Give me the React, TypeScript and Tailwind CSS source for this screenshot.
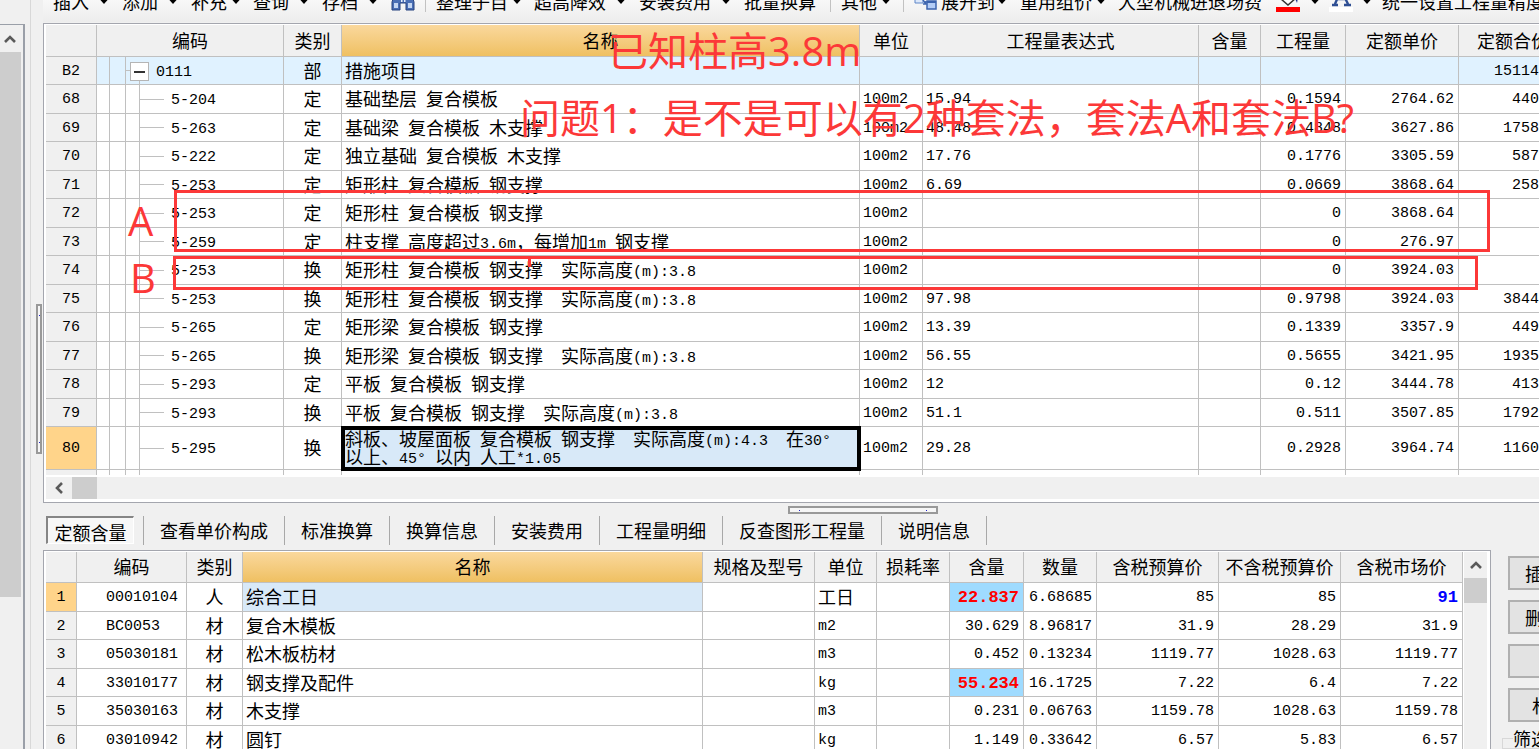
import React from "react";

const SANS = "font-['Noto_Sans_CJK_SC',sans-serif]";
const MONO = "font-['Liberation_Mono','Noto_Sans_CJK_SC',monospace]";

/** Mixed text: Latin runs take a half-width monospaced face beside full-width Chinese. */
function T({ children }: { children: string }) {
  const parts = children.split(/([\x20-\x7e°]+)/).filter(Boolean);
  return (
    <>
      {parts.map((p, i) =>
        /^[\x20-\x7e°]/.test(p) ? (
          <span key={i} className={`${MONO} align-[1px] text-[15px] leading-[0px]`}>{p}</span>
        ) : (
          <React.Fragment key={i}>{p}</React.Fragment>
        )
      )}
    </>
  );
}

function Caret() {
  return (
    <svg width="8" height="8" viewBox="0 0 8 8" className="shrink-0" aria-hidden="true">
      <path d="M0 1.5h8v1L4 7 0 2.500z" fill="#000" />
    </svg>
  );
}

function Chevron({ dir }: { dir: "up" | "left" }) {
  return (
    <svg width="12" height="12" viewBox="0 0 12 12" aria-hidden="true">
      <path d={dir === "up" ? "M1 9l5-5 5 5" : "M9 1L4 6l5 5"} fill="none" stroke="#5a5a5a" strokeWidth="2.6" />
    </svg>
  );
}

function Tool({ label, menu, tight }: { label: string; menu?: boolean; tight?: boolean }) {
  return (
    <button type="button" className={`flex shrink-0 items-center whitespace-nowrap ${tight ? "gap-[5px] pr-[13px]" : "gap-[11px] pr-[14px]"}`}>
      {label}
      {menu && <Caret />}
    </button>
  );
}

const Sep = () => <span className="mr-[10px] h-[22px] w-px shrink-0 self-end bg-[#c2c2c2]" />;

function Toolbar() {
  return (
    <div className="flex h-[22px] shrink-0 items-end overflow-hidden bg-linear-to-b from-[#f8f8f8] to-[#ededed] pl-[10px] text-[18px]">
      <div className="flex shrink-0 items-center pb-[10px] leading-[20px]">
        <Tool label="插入" menu />
        <Tool label="添加" menu />
        <Tool label="补充" menu tight />
        <Tool label="查询" menu />
        <Tool label="存档" menu />
        <button type="button" aria-label="查找" className="mr-[10px] shrink-0">
          <svg width="24" height="20" viewBox="0 0 24 20">
            <path d="M4 2h5v4h6V2h5l3 9v8h-8v-7H9v7H1v-8z" fill="#4a6fb5" stroke="#27437f" />
            <path d="M3 12h4v5H3zM17 12h4v5h-4z" fill="#c4d6f2" />
            <path d="M10 6h1.500v5H10zM13 6h1.500v5H13z" fill="#e4edfa" />
          </svg>
        </button>
        <Sep />
        <Tool label="整理子目" menu tight />
        <Tool label="超高降效" menu />
        <Tool label="安装费用" menu />
        <Tool label="批量换算" />
        <Sep />
        <Tool label="其他" menu tight />
        <Sep />
        <button type="button" className="flex shrink-0 items-center gap-[3px] pr-[14px]">
          <svg width="24" height="20" viewBox="0 0 24 20" aria-hidden="true">
            <path d="M1 3h8v9H1z" fill="#dce8fa" stroke="#5f86c8" />
            <path d="M13 10h9v8h-9z" fill="#b4cdf6" stroke="#3c64ae" strokeWidth="1.500" />
            <path d="M13 10h9v2h-9z" fill="#3c64ae" />
            <path d="M9 9l3 4M12 10v3H9" fill="none" stroke="#3c64ae" strokeWidth="1.500" />
          </svg>
          展开到
          <Caret />
        </button>
        <Tool label="重用组价" menu tight />
        <Tool label="大型机械进退场费" />
        <button type="button" aria-label="填充颜色" className="flex shrink-0 items-center gap-[11px] pr-[10px]">
          <svg width="24" height="22" viewBox="0 0 24 22">
            <path d="M5 9l8-8 7 7-8 7z" fill="#fff" stroke="#333" strokeWidth="1.500" />
            <path d="M17 4c5 1 5 5 4 9-1-3-2-4-4-5z" fill="#1c2f8a" />
            <path d="M0 17h24v5H0z" fill="#f00" />
          </svg>
          <Caret />
        </button>
        <button type="button" aria-label="文字颜色" className="flex shrink-0 items-center gap-[10px] pr-[11px]">
          <svg width="24" height="22" viewBox="0 0 24 22">
            <path d="M3 15h6M15 15h7M6 14L12 0l7 14M8 9h8" fill="none" stroke="#2f4f94" strokeWidth="2.400" />
            <path d="M0 17h24v5H0z" fill="#fff" />
          </svg>
          <Caret />
        </button>
        <Tool label="统一设置工程量精度" />
      </div>
    </div>
  );
}

const TH = "border-b border-r border-[#c0c0c0] bg-[#f0f0f0] px-0 pt-0 pb-[2px] text-center font-normal";
const TH_GOLD = "border-b border-r border-[#c0c0c0] bg-linear-to-b from-[#fad89c] to-[#efc061] px-0 pt-0 pb-[2px] text-center font-normal";
const TD = "border-b border-r border-[#c0c0c0] pt-0 pb-[2px]";
const NUM = "font-['Liberation_Mono',monospace] text-[15px]";
const NUM_BOLD = "font-['Liberation_Mono',monospace] text-[17px] font-bold";
const TDN = "border-b border-r border-[#c0c0c0] pt-[2px] pb-0";

type Item = [no: string, code: string, kind: string, name: string, unit: string, expr: string, qty: string, price: string, total: string];

const items: Item[] = [
  ["B2", "0111", "部", "措施项目", "", "", "", "", "15114"],
  ["68", "5-204", "定", "基础垫层 复合模板", "100m2", "15.94", "0.1594", "2764.62", "440"],
  ["69", "5-263", "定", "基础梁 复合模板 木支撑", "100m2", "48.48", "0.4848", "3627.86", "1758"],
  ["70", "5-222", "定", "独立基础 复合模板 木支撑", "100m2", "17.76", "0.1776", "3305.59", "587"],
  ["71", "5-253", "定", "矩形柱 复合模板 钢支撑", "100m2", "6.69", "0.0669", "3868.64", "258"],
  ["72", "5-253", "定", "矩形柱 复合模板 钢支撑", "100m2", "", "0", "3868.64", ""],
  ["73", "5-259", "定", "柱支撑 高度超过3.6m，每增加1m 钢支撑", "100m2", "", "0", "276.97", ""],
  ["74", "5-253", "换", "矩形柱 复合模板 钢支撑  实际高度(m):3.8", "100m2", "", "0", "3924.03", ""],
  ["75", "5-253", "换", "矩形柱 复合模板 钢支撑  实际高度(m):3.8", "100m2", "97.98", "0.9798", "3924.03", "3844"],
  ["76", "5-265", "定", "矩形梁 复合模板 钢支撑", "100m2", "13.39", "0.1339", "3357.9", "449"],
  ["77", "5-265", "换", "矩形梁 复合模板 钢支撑  实际高度(m):3.8", "100m2", "56.55", "0.5655", "3421.95", "1935"],
  ["78", "5-293", "定", "平板 复合模板 钢支撑", "100m2", "12", "0.12", "3444.78", "413"],
  ["79", "5-293", "换", "平板 复合模板 钢支撑  实际高度(m):3.8", "100m2", "51.1", "0.511", "3507.85", "1792"],
  ["80", "5-295", "换", "斜板、坡屋面板 复合模板 钢支撑  实际高度(m):4.3  在30°\n以上、45° 以内 人工*1.05", "100m2", "29.28", "0.2928", "3964.74", "1160"],
];

function Tree({ code, group, height }: { code: string; group?: boolean; height: string }) {
  return (
    <div className={`flex items-center ${height}`}>
      <span className="h-full w-[13px] border-r border-[#c0c0c0]" />
      <span className="h-full w-[16px] border-r border-[#c0c0c0]" />
      {group ? (
        <>
          <span className="h-px w-[4px] bg-[#c0c0c0]" />
          <span className="flex h-full flex-col items-center">
            <span className="h-[5px]" />
            <button type="button" aria-label="折叠" className="flex h-[19px] w-[19px] items-center justify-center border border-[#b5b5b5] bg-white">
              <span className="h-[2px] w-[11px] bg-[#333]" />
            </button>
            <span className="w-px grow bg-[#c0c0c0]" />
          </span>
        </>
      ) : (
        <>
          <span className="h-full w-[14px] border-r border-[#c0c0c0]" />
          <span className="h-px w-[24px] bg-[#c0c0c0]" />
        </>
      )}
      <span className={`pt-[4px] pl-[7px] ${NUM}`}>{code}</span>
    </div>
  );
}

function ItemTable() {
  return (
    <table className="w-full table-fixed border-separate border-spacing-0 bg-white text-[18px] leading-[18px]">
      <colgroup>
        <col className="w-[51px]" />
        <col className="w-[187px]" />
        <col className="w-[58px]" />
        <col />
        <col className="w-[63px]" />
        <col className="w-[276px]" />
        <col className="w-[62px]" />
        <col className="w-[85px]" />
        <col className="w-[113px]" />
        <col className="w-[80px]" />
      </colgroup>
      <thead>
        <tr className="h-[32px]">
          <th className={TH} aria-label="序号" />
          <th className={TH}>编码</th>
          <th className={TH}>类别</th>
          <th className={TH_GOLD}>名称</th>
          <th className={TH}>单位</th>
          <th className={TH}>工程量表达式</th>
          <th className={TH}>含量</th>
          <th className={TH}>工程量</th>
          <th className={TH}>定额单价</th>
          <th className="overflow-hidden whitespace-nowrap border-b border-[#c0c0c0] bg-[#f0f0f0] pt-0 pr-0 pb-[2px] pl-[18px] text-left font-normal">定额合价</th>
        </tr>
      </thead>
      <tbody>
        {items.map(([no, code, kind, name, unit, expr, qty, price, total], i) => {
          const group = i === 0;
          const current = no === "80";
          const rowH = current ? "h-[43px]" : i % 2 ? "h-[29px]" : "h-[28px]";
          const treeH = current ? "h-[42px]" : i % 2 ? "h-[28px]" : "h-[27px]";
          return (
            <tr key={no} className={`${rowH} ${group ? "bg-[#e0f2ff]" : "bg-white"}`}>
              <td className={`${TDN} ${NUM} px-0 text-center ${current ? "bg-[#ffd48a]" : "bg-[#f0f0f0]"}`}>{no}</td>
              <td className="border-b border-r border-[#c0c0c0] p-0"><Tree code={code} group={group} height={treeH} /></td>
              <td className={`${TD} px-0 text-center`}>{kind}</td>
              <td className={`${TD} whitespace-pre pr-0 pl-[3px] ${current ? "bg-[#d8e9f8] outline-4 -outline-offset-3 outline-black" : ""}`}><T>{name}</T></td>
              <td className={`${TDN} ${NUM} pr-0 pl-[3px]`}>{unit}</td>
              <td className={`${TDN} ${NUM} pr-0 pl-[3px]`}>{expr}</td>
              <td className={`${TD} px-0`} />
              <td className={`${TDN} ${NUM} pr-[4px] pl-0 text-right`}>{qty}</td>
              <td className={`${TDN} ${NUM} pr-[4px] pl-0 text-right`}>{price}</td>
              <td className={`border-b border-[#c0c0c0] px-0 pt-[2px] pb-0 text-right ${NUM}`}>{total}</td>
            </tr>
          );
        })}
        <tr className="h-[5px]" aria-hidden="true">
          <td className="border-r border-[#c0c0c0] bg-[#f0f0f0] p-0" />
          <td className="border-r border-[#c0c0c0] p-0">
            <div className="flex h-[5px]">
              <span className="w-[13px] border-r border-[#c0c0c0]" />
              <span className="w-[16px] border-r border-[#c0c0c0]" />
              <span className="w-[14px] border-r border-[#c0c0c0]" />
            </div>
          </td>
          {[0, 1, 2, 3, 4, 5, 6].map((k) => (
            <td key={k} className="border-r border-[#c0c0c0] p-0" />
          ))}
          <td className="p-0" />
        </tr>
      </tbody>
    </table>
  );
}

const tabs = ["定额含量", "查看单价构成", "标准换算", "换算信息", "安装费用", "工程量明细", "反查图形工程量", "说明信息"];

function Tabs() {
  return (
    <div role="tablist" className="flex h-[34px] shrink-0 items-start pl-[3px] text-[18px] leading-[20px]">
      {tabs.map((t, i) =>
        i === 0 ? (
          <div key={t} className="flex h-[29px] border-r border-[#a8a8a8] pr-[9px]">
            <button role="tab" aria-selected="true" type="button" className="h-[28px] w-[88px] border-t-2 border-l-2 border-r border-b border-[#858585] border-r-white border-b-white bg-[#f7f7f7] pt-[2px]">
              {t}
            </button>
          </div>
        ) : (
          <button key={t} role="tab" aria-selected="false" type="button" className="h-[29px] whitespace-nowrap border-r border-[#a8a8a8] px-[16px] pb-[2px]">
            {t}
          </button>
        )
      )}
    </div>
  );
}

type Part = [code: string, kind: string, name: string, unit: string, content: string, amount: string, taxed: string, untaxed: string, market: string];

const parts: Part[] = [
  ["00010104", "人", "综合工日", "工日", "22.837", "6.68685", "85", "85", "91"],
  ["BC0053", "材", "复合木模板", "m2", "30.629", "8.96817", "31.9", "28.29", "31.9"],
  ["05030181", "材", "松木板枋材", "m3", "0.452", "0.13234", "1119.77", "1028.63", "1119.77"],
  ["33010177", "材", "钢支撑及配件", "kg", "55.234", "16.1725", "7.22", "6.4", "7.22"],
  ["35030163", "材", "木支撑", "m3", "0.231", "0.06763", "1159.78", "1028.63", "1159.78"],
  ["03010942", "材", "圆钉", "kg", "1.149", "0.33642", "6.57", "5.83", "6.57"],
];

function PartTable() {
  return (
    <table className="min-w-0 grow table-fixed border-separate border-spacing-0 self-start bg-white text-[18px] leading-[18px]">
      <colgroup>
        <col className="w-[31px]" />
        <col className="w-[110px]" />
        <col className="w-[56px]" />
        <col />
        <col className="w-[112px]" />
        <col className="w-[62px]" />
        <col className="w-[73px]" />
        <col className="w-[74px]" />
        <col className="w-[73px]" />
        <col className="w-[122px]" />
        <col className="w-[122px]" />
        <col className="w-[122px]" />
      </colgroup>
      <thead>
        <tr className="h-[31px]">
          <th className={TH} aria-label="序号" />
          <th className={TH}>编码</th>
          <th className={TH}>类别</th>
          <th className={TH_GOLD}>名称</th>
          <th className={TH}>规格及型号</th>
          <th className={TH}>单位</th>
          <th className={TH}>损耗率</th>
          <th className={TH}>含量</th>
          <th className={TH}>数量</th>
          <th className={TH}>含税预算价</th>
          <th className={TH}>不含税预算价</th>
          <th className={TH}>含税市场价</th>
        </tr>
      </thead>
      <tbody>
        {parts.map(([code, kind, name, unit, content, amount, taxed, untaxed, market], i) => {
          const hot = i === 0 || i === 3;
          return (
            <tr key={code} className={i % 2 ? "h-[28px]" : "h-[29px]"}>
              <td className={`${TDN} ${NUM} px-0 text-center ${i === 0 ? "bg-[#ffd48a]" : "bg-[#f0f0f0]"}`}>{i + 1}</td>
              <td className={`${TDN} ${NUM} pr-0 pl-[29px]`}>{code}</td>
              <td className={`${TD} px-0 text-center`}>{kind}</td>
              <td className={`${TD} pr-0 pl-[3px] ${i === 0 ? "bg-[#d8e9f8]" : ""}`}>{name}</td>
              <td className={`${TD} px-0`} />
              <td className={`pr-0 pl-[3px] ${i === 0 ? TD : `${TDN} ${NUM}`}`}>{unit}</td>
              <td className={`${TD} px-0`} />
              <td className={`${TDN} pr-[4px] pl-0 text-right ${hot ? `${NUM_BOLD} bg-[#9fdbff] text-[#f00]` : NUM}`}>{content}</td>
              <td className={`${TDN} ${NUM} pr-[4px] pl-0 text-right`}>{amount}</td>
              <td className={`${TDN} ${NUM} pr-[4px] pl-0 text-right`}>{taxed}</td>
              <td className={`${TDN} ${NUM} pr-[4px] pl-0 text-right`}>{untaxed}</td>
              <td className={`${TDN} pr-[4px] pl-0 text-right ${i === 0 ? `${NUM_BOLD} text-[#00f]` : NUM}`}>{market}</td>
            </tr>
          );
        })}
      </tbody>
    </table>
  );
}

const SIDE = "h-[34px] overflow-hidden whitespace-nowrap border-2 border-r-0 border-[#b0b0b0] bg-[#e3e3e3] text-left";

function SideButtons() {
  return (
    <div className="flex w-[48px] shrink-0 flex-col overflow-hidden pt-[6px] text-[18px] leading-[20px]">
      <div className="flex flex-col gap-[10px] pl-[17px]">
        <button type="button" className={`${SIDE} pl-[15px]`}>插</button>
        <button type="button" className={`${SIDE} pl-[15px]`}>删</button>
        <button type="button" aria-label="更多" className={SIDE} />
        <button type="button" className={`${SIDE} pl-[22px]`}>材</button>
      </div>
      <fieldset className="mt-[6px] ml-[11px] h-[40px] border border-r-0 border-[#d8d8d8] pl-[10px]">
        <legend className="whitespace-nowrap">筛选</legend>
      </fieldset>
    </div>
  );
}

const NOTE = "absolute whitespace-nowrap font-['Open_Sans','Noto_Sans_CJK_SC',sans-serif] text-[40px] leading-[48px] text-[#fc3838]";

function Annotations() {
  return (
    <div className="pointer-events-none absolute inset-0">
      <p className={`${NOTE} top-[27px] left-[608px]`}>已知柱高3.8m</p>
      <p className={`${NOTE} top-[94px] left-[520px]`}>问题1：是不是可以有2种套法，套法A和套法B?</p>
      <p className={`${NOTE} top-[197px] left-[128px]`}>A</p>
      <p className={`${NOTE} top-[254px] left-[130px]`}>B</p>
      <div className="absolute top-[190px] left-[174px] h-[62px] w-[1316px] border-3 border-[#fc3838]" />
      <div className="absolute top-[256px] left-[173px] h-[34px] w-[1305px] border-3 border-[#fc3838]" />
      <div className="absolute top-[259px] left-[528px] h-[8px] w-[3px] bg-[#fc3838]" />
    </div>
  );
}

export default function App() {
  return (
    <div className={`relative flex h-screen overflow-hidden bg-[#f0f0f0] text-black ${SANS}`}>
      <aside className="flex w-[31px] shrink-0 border-r border-[#d8d8d8] pt-[24px]">
        <div className="flex w-[25px] flex-col border-t border-r-2 border-[#9a9fa8] pr-[2px]">
          <button type="button" aria-label="向上滚动" className="flex h-[27px] w-[19px] items-center justify-center">
            <Chevron dir="up" />
          </button>
          <div className="h-[545px] w-[21px] bg-[#cdcdcd]" />
        </div>
      </aside>
      <div className="flex w-[12px] shrink-0 flex-col justify-start pt-[304px] pl-[5px]">
        <div className="flex h-[150px] w-[6px] flex-col items-end justify-between border-2 border-[#999] bg-[#f6f6f6] py-[9px]">
          <span className="h-px w-px bg-[#22c]" />
          <span className="h-px w-px bg-[#22c]" />
        </div>
      </div>
      <main className="flex min-w-0 grow flex-col">
        <Toolbar />
        <section className="mt-px shrink-0 border-t border-b border-l border-[#a4a6ae]">
          <div className="border-t border-l-2 border-white">
            <ItemTable />
            <div className="h-[2px] bg-white" />
            <div className="flex h-[22px] items-center">
              <button type="button" aria-label="向左滚动" className="flex h-full w-[26px] items-center justify-center">
                <Chevron dir="left" />
              </button>
              <div className="h-[22px] w-[25px] bg-[#cdcdcd]" />
            </div>
            <div className="h-[3px] bg-white" />
          </div>
        </section>
        <div className="flex h-[13px] shrink-0 justify-center pt-[3px] pl-[144px]">
          <div className="flex h-[8px] w-[150px] items-center justify-between border-2 border-[#999] bg-[#f6f6f6] px-[9px]">
            <span className="h-px w-px bg-[#22c]" />
            <span className="h-px w-px bg-[#22c]" />
          </div>
        </div>
        <Tabs />
        <div className="flex min-h-0 grow">
          <section className="flex min-w-0 grow items-start overflow-hidden border-t border-r border-l border-[#a4a6ae]">
            <div className="flex min-w-0 grow self-stretch border-t border-l-2 border-white bg-white">
              <PartTable />
              <div className="ml-px flex w-[24px] shrink-0 flex-col border-r border-white bg-[#f0f0f0]">
                <button type="button" aria-label="向上滚动" className="flex h-[26px] items-center justify-center">
                  <Chevron dir="up" />
                </button>
                <div className="h-[25px] bg-[#cdcdcd]" />
              </div>
              <div className="w-[2px] shrink-0 bg-white" />
            </div>
          </section>
          <SideButtons />
        </div>
      </main>
      <Annotations />
    </div>
  );
}
